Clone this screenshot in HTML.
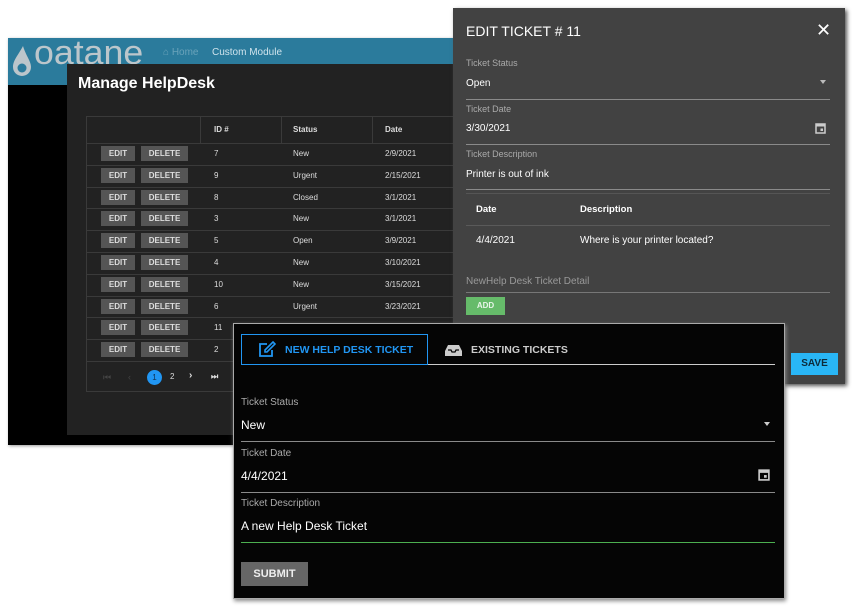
<!DOCTYPE html>
<html><head><style>
*{margin:0;padding:0;box-sizing:border-box}
body{width:852px;height:610px;background:#fff;position:relative;overflow:hidden;font-family:"Liberation Sans",sans-serif}
.a{position:absolute}
.btn{position:absolute;background:#555;color:#ddd;font-size:8px;font-weight:bold;text-align:center;line-height:15px;height:15px}
.cell{position:absolute;color:#ddd;font-size:8px}
.hl{position:absolute;height:1px;background:#3a3a3a}
.lbl{position:absolute;color:#aaa;font-size:10px}
.val{position:absolute;color:#fff;font-size:11px}
.ul{position:absolute;height:1px;background:#8a8a8a}
</style></head><body>
<!-- back window -->
<div class="a" style="left:8px;top:38px;width:447px;height:407px;background:#000;box-shadow:1px 1px 3px #999"></div>
<div class="a" style="left:8px;top:38px;width:447px;height:47px;background:#2b7b9c"></div>
<svg class="a" style="left:10px;top:44px" width="24" height="34" viewBox="0 0 24 34"><path d="M13 2 C9 10 3 16 3 23 a9 9 0 0 0 18 0 C21 17 16 12 13 2Z" fill="#bcc6cb"/><circle cx="12" cy="24" r="4.5" fill="#2b7b9c"/></svg>
<div class="a" style="left:34px;top:34px;color:#bcc6cb;font-size:34px;letter-spacing:0px;transform:scaleX(1.05);transform-origin:left">oatane</div>
<div class="a" style="left:163px;top:47px;color:#6aa3ba;font-size:10px">⌂ Home</div>
<div class="a" style="left:212px;top:47px;color:#cfe3ec;font-size:10px">Custom Module</div>
<div class="a" style="left:67px;top:64px;width:388px;height:371px;background:#222"></div>
<div class="a" style="left:78px;top:75px;color:#fff;font-size:16px;font-weight:bold">Manage HelpDesk</div>
<div class="a" style="left:86px;top:116px;width:369px;height:276px;border:1px solid #3a3a3a"></div>
<div class="a" style="left:200px;top:116px;width:1px;height:27px;background:#3a3a3a"></div>
<div class="a" style="left:281px;top:116px;width:1px;height:27px;background:#3a3a3a"></div>
<div class="a" style="left:372px;top:116px;width:1px;height:27px;background:#3a3a3a"></div>
<div class="cell" style="left:214px;top:125px;font-weight:bold">ID #</div>
<div class="cell" style="left:293px;top:125px;font-weight:bold">Status</div>
<div class="cell" style="left:385px;top:125px;font-weight:bold">Date</div>
<div id="rows"></div>
<div class="a" style="left:103px;top:372px;color:#444;font-size:9px">⏮</div>
<div class="a" style="left:128px;top:372px;color:#444;font-size:9px">‹</div>
<div class="a" style="left:147px;top:370px;width:15px;height:15px;border-radius:50%;background:#2196f3;color:#135;font-size:8px;text-align:center;line-height:15px">1</div>
<div class="a" style="left:170px;top:372px;color:#ddd;font-size:8px">2</div>
<div class="a" style="left:189px;top:370px;color:#ddd;font-size:10px;font-weight:bold">›</div>
<div class="a" style="left:211px;top:372px;color:#ddd;font-size:8px;font-weight:bold">⏭</div>

<!-- edit dialog -->
<div class="a" style="left:453px;top:8px;width:392px;height:376px;background:#424242;box-shadow:2px 2px 4px #555"></div>
<div class="a" style="left:466px;top:23px;color:#fff;font-size:14px">EDIT TICKET # 11</div>
<div class="a" style="left:816px;top:20px;color:#fff;font-size:18px">✕</div>
<div class="lbl" style="left:466px;top:58px;font-size:9px">Ticket Status</div>
<div class="val" style="left:466px;top:78px;font-size:10px">Open</div>
<div class="a" style="left:820px;top:80px;border:3px solid transparent;border-top:4px solid #bbb"></div>
<div class="ul" style="left:466px;top:99px;width:364px"></div>
<div class="lbl" style="left:466px;top:104px;font-size:9px">Ticket Date</div>
<div class="val" style="left:466px;top:123px;font-size:10px">3/30/2021</div>
<svg class="a" style="left:815px;top:122px" width="11" height="12" viewBox="0 0 11 12"><rect x="1" y="2" width="9" height="9" fill="none" stroke="#ccc" stroke-width="1.5"/><rect x="1" y="2" width="9" height="2.5" fill="#ccc"/><rect x="5.5" y="6.5" width="2.5" height="2.5" fill="#ccc"/></svg>
<div class="ul" style="left:466px;top:144px;width:364px"></div>
<div class="lbl" style="left:466px;top:149px;font-size:9px">Ticket Description</div>
<div class="val" style="left:466px;top:169px;font-size:10px">Printer is out of ink</div>
<div class="ul" style="left:466px;top:189px;width:364px"></div>
<div class="a" style="left:466px;top:193px;width:364px;height:1px;background:#555"></div>
<div class="val" style="left:476px;top:204px;font-size:9.5px;font-weight:bold">Date</div>
<div class="val" style="left:580px;top:204px;font-size:9.5px;font-weight:bold">Description</div>
<div class="a" style="left:466px;top:225px;width:364px;height:1px;background:#5a5a5a"></div>
<div class="val" style="left:476px;top:235px;font-size:10px">4/4/2021</div>
<div class="val" style="left:580px;top:235px;font-size:10px">Where is your printer located?</div>
<div class="lbl" style="left:466px;top:276px;font-size:10px;color:#999">NewHelp Desk Ticket Detail</div>
<div class="ul" style="left:466px;top:292px;width:364px;background:#777"></div>
<div class="a" style="left:466px;top:297px;width:39px;height:18px;background:#66bb6a;color:#e8f5e9;font-size:8px;font-weight:bold;text-align:center;line-height:18px">ADD</div>
<div class="a" style="left:791px;top:353px;width:47px;height:22px;background:#29b6f6;color:#0d2a3a;font-size:10px;font-weight:bold;text-align:center;line-height:22px">SAVE</div>

<!-- new ticket panel -->
<div class="a" style="left:233px;top:323px;width:552px;height:276px;background:#050505;border:1px solid #aaa;box-shadow:1px 2px 4px #888"></div>
<div class="a" style="left:241px;top:334px;width:187px;height:31px;border:1px solid #2196f3"></div>
<svg class="a" style="left:258px;top:341px" width="18" height="17" viewBox="0 0 18 17"><path d="M9 3H2v12h12V9" fill="none" stroke="#2196f3" stroke-width="1.8"/><path d="M15 1l2 2-8 8H7V9z" fill="none" stroke="#2196f3" stroke-width="1.6"/></svg>
<div class="a" style="left:285px;top:344px;color:#2196f3;font-size:10.5px;font-weight:bold">NEW HELP DESK TICKET</div>
<svg class="a" style="left:444px;top:344px" width="19" height="13" viewBox="0 0 19 13"><path d="M4 1h11l3 6v5H1V7z" fill="#ccc"/><path d="M4 6h3l1 2h3l1-2h3" fill="none" stroke="#050505" stroke-width="1.3"/></svg>
<div class="a" style="left:471px;top:344px;color:#ccc;font-size:10.5px;font-weight:bold">EXISTING TICKETS</div>
<div class="a" style="left:428px;top:364px;width:347px;height:1px;background:#ccc"></div>
<div class="lbl" style="left:241px;top:397px">Ticket Status</div>
<div class="val" style="left:241px;top:418px;font-size:12px">New</div>
<div class="a" style="left:764px;top:422px;border:3.5px solid transparent;border-top:4px solid #ccc"></div>
<div class="ul" style="left:241px;top:441px;width:534px"></div>
<div class="lbl" style="left:241px;top:448px">Ticket Date</div>
<div class="val" style="left:241px;top:469px;font-size:12px">4/4/2021</div>
<svg class="a" style="left:758px;top:468px" width="12" height="13" viewBox="0 0 11 12"><rect x="1" y="2" width="9" height="9" fill="none" stroke="#ccc" stroke-width="1.5"/><rect x="1" y="2" width="9" height="2.5" fill="#ccc"/><rect x="5.5" y="6.5" width="2.5" height="2.5" fill="#ccc"/></svg>
<div class="ul" style="left:241px;top:492px;width:534px"></div>
<div class="lbl" style="left:241px;top:498px">Ticket Description</div>
<div class="val" style="left:241px;top:519px;font-size:12px">A new Help Desk Ticket</div>
<div class="a" style="left:241px;top:542px;width:534px;height:1px;background:#4caf50"></div>
<div class="a" style="left:241px;top:562px;width:67px;height:24px;background:#666;color:#eee;font-size:11px;font-weight:bold;text-align:center;line-height:24px">SUBMIT</div>

<script>
var d=[["7","New","2/9/2021"],["9","Urgent","2/15/2021"],["8","Closed","3/1/2021"],["3","New","3/1/2021"],["5","Open","3/9/2021"],["4","New","3/10/2021"],["10","New","3/15/2021"],["6","Urgent","3/23/2021"],["11","",""],["2","",""]];
var h="";d.forEach(function(r,i){var y=143+i*21.8;
h+='<div class="hl" style="left:87px;top:'+Math.round(y)+'px;width:367px"></div>';
h+='<div class="btn" style="left:101px;top:'+Math.round(y+3)+'px;width:34px">EDIT</div>';
h+='<div class="btn" style="left:141px;top:'+Math.round(y+3)+'px;width:47px">DELETE</div>';
h+='<div class="cell" style="left:214px;top:'+Math.round(y+6)+'px">'+r[0]+'</div>';
h+='<div class="cell" style="left:293px;top:'+Math.round(y+6)+'px">'+r[1]+'</div>';
h+='<div class="cell" style="left:385px;top:'+Math.round(y+6)+'px">'+r[2]+'</div>';});
h+='<div class="hl" style="left:87px;top:361px;width:367px"></div>';
document.getElementById("rows").innerHTML=h;
</script>
</body></html>
